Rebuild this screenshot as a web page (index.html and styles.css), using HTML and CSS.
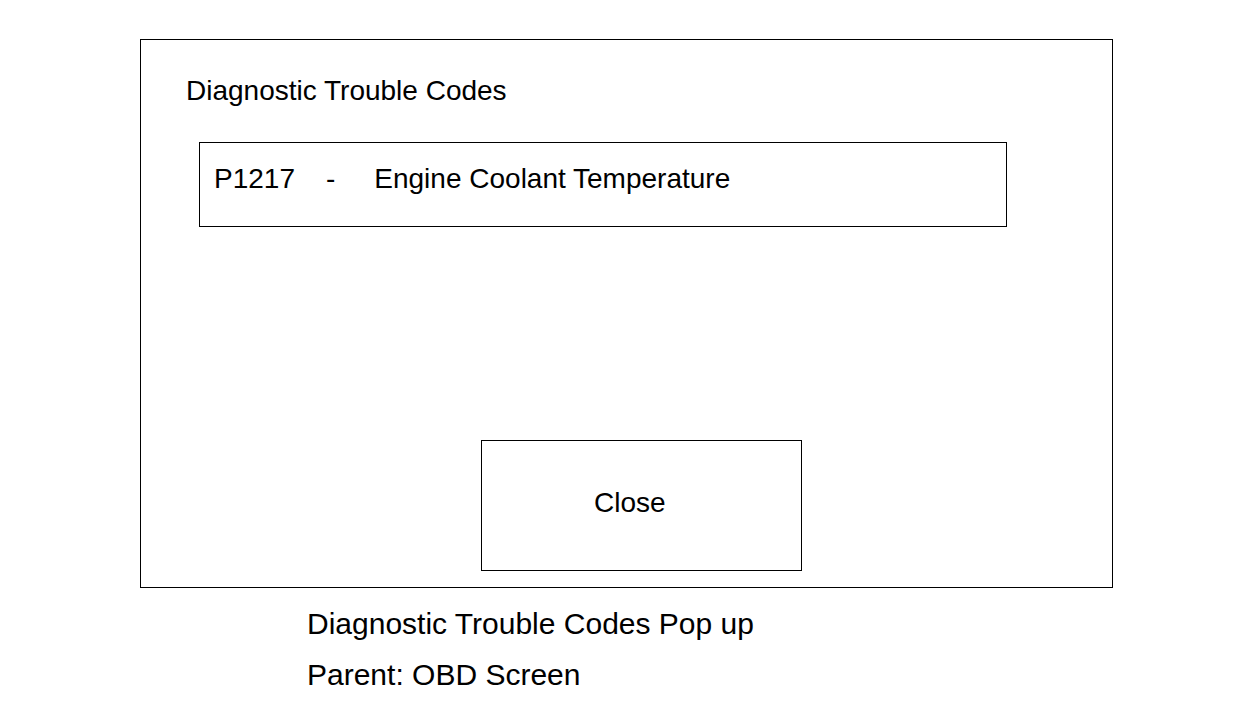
FILE: index.html
```html
<!DOCTYPE html>
<html>
<head>
<meta charset="utf-8">
<title>Diagnostic Trouble Codes Pop up</title>
<link rel="stylesheet" href="styles.css">
</head>
<body>
<div class="page">
  <div class="popup">
    <div class="popup-title">Diagnostic Trouble Codes</div>
    <div class="code-row">
      <span class="code">P1217</span><span class="dash">-</span><span class="desc">Engine Coolant Temperature</span>
    </div>
    <div class="close-btn">Close</div>
  </div>
  <div class="caption">
    <div class="caption-line">Diagnostic Trouble Codes Pop up</div>
    <div class="caption-line">Parent: OBD Screen</div>
  </div>
</div>
</body>
</html>
```

FILE: styles.css
```css
html, body {
  margin: 0;
  padding: 0;
  background: #fff;
}
body {
  font-family: "Liberation Sans", Arial, sans-serif;
  color: #000;
  width: 1244px;
  height: 709px;
  overflow: hidden;
}
.page {
  padding: 39px 0 0 140px;
}
.popup {
  box-sizing: border-box;
  width: 973px;
  height: 549px;
  border: 1px solid #000;
  padding: 35px 0 0 45px;
}
.popup-title {
  font-size: 28px;
  line-height: 32px;
  white-space: nowrap;
}
.code-row {
  box-sizing: border-box;
  width: 808px;
  height: 85px;
  margin: 35px 0 0 13px;
  border: 1px solid #000;
  padding: 20px 0 0 14px;
  font-size: 28px;
  line-height: 32px;
  white-space: nowrap;
}
.dash {
  margin-left: 31px;
}
.desc {
  margin-left: 39px;
}
.close-btn {
  box-sizing: border-box;
  width: 321px;
  height: 131px;
  margin: 213px 0 0 295px;
  border: 1px solid #000;
  padding: 46px 0 0 112px;
  font-size: 28px;
  line-height: 32px;
}
.caption {
  padding: 10px 0 0 167px;
  font-size: 30px;
  line-height: 51px;
  white-space: nowrap;
}
```
